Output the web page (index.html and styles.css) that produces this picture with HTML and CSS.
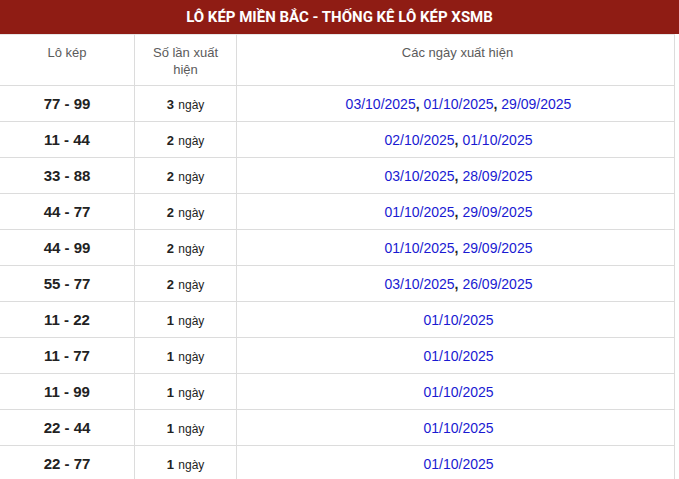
FILE: index.html
```html
<!DOCTYPE html>
<html lang="vi">
<head>
<meta charset="utf-8">
<title>Lô kép miền Bắc</title>
<link rel="stylesheet" href="styles.css">
</head>
<body>
<div class="title">LÔ KÉP MIỀN BẮC - THỐNG KÊ LÔ KÉP XSMB</div>
<table class="stats">
  <colgroup><col class="c1"><col class="c2"><col class="c3"></colgroup>
  <thead>
    <tr><th>Lô kép</th><th>Số lần xuất hiện</th><th>Các ngày xuất hiện</th></tr>
  </thead>
  <tbody>
    <tr><td class="pair">77 - 99</td><td class="cnt"><b>3</b> <span>ngày</span></td><td class="dates"><a>03/10/2025</a><b>,</b> <a>01/10/2025</a><b>,</b> <a>29/09/2025</a></td></tr>
    <tr><td class="pair">11 - 44</td><td class="cnt"><b>2</b> <span>ngày</span></td><td class="dates"><a>02/10/2025</a><b>,</b> <a>01/10/2025</a></td></tr>
    <tr><td class="pair">33 - 88</td><td class="cnt"><b>2</b> <span>ngày</span></td><td class="dates"><a>03/10/2025</a><b>,</b> <a>28/09/2025</a></td></tr>
    <tr><td class="pair">44 - 77</td><td class="cnt"><b>2</b> <span>ngày</span></td><td class="dates"><a>01/10/2025</a><b>,</b> <a>29/09/2025</a></td></tr>
    <tr><td class="pair">44 - 99</td><td class="cnt"><b>2</b> <span>ngày</span></td><td class="dates"><a>01/10/2025</a><b>,</b> <a>29/09/2025</a></td></tr>
    <tr><td class="pair">55 - 77</td><td class="cnt"><b>2</b> <span>ngày</span></td><td class="dates"><a>03/10/2025</a><b>,</b> <a>26/09/2025</a></td></tr>
    <tr><td class="pair">11 - 22</td><td class="cnt"><b>1</b> <span>ngày</span></td><td class="dates"><a>01/10/2025</a></td></tr>
    <tr><td class="pair">11 - 77</td><td class="cnt"><b>1</b> <span>ngày</span></td><td class="dates"><a>01/10/2025</a></td></tr>
    <tr><td class="pair">11 - 99</td><td class="cnt"><b>1</b> <span>ngày</span></td><td class="dates"><a>01/10/2025</a></td></tr>
    <tr><td class="pair">22 - 44</td><td class="cnt"><b>1</b> <span>ngày</span></td><td class="dates"><a>01/10/2025</a></td></tr>
    <tr><td class="pair">22 - 77</td><td class="cnt"><b>1</b> <span>ngày</span></td><td class="dates"><a>01/10/2025</a></td></tr>
  </tbody>
</table>
</body>
</html>
```

FILE: styles.css
```css
html, body {
  margin: 0;
  padding: 0;
  background: #fff;
}
body {
  font-family: "Liberation Sans", Arial, sans-serif;
  color: #222;
}
.title {
  height: 34px;
  background: #8f1c14;
  color: #fff;
  font-family: Roboto, "Liberation Sans", sans-serif;
  font-weight: 700;
  font-size: 15px;
  line-height: 34px;
  text-align: center;
}
.stats {
  width: 675px;
  border-collapse: separate;
  border-spacing: 0;
  table-layout: fixed;
}
.c1 { width: 135px; }
.c2 { width: 102px; }
.c3 { width: 438px; }
.stats th,
.stats td {
  box-sizing: border-box;
  border-right: 1px solid #dcdcdc;
  border-bottom: 1px solid #dcdcdc;
  text-align: center;
  padding: 0 4px;
}
.stats th {
  height: 52px;
  vertical-align: top;
  font-weight: 400;
  font-size: 13px;
  line-height: 17px;
  color: #5b5b5b;
  padding-top: 9px;
  border-top: 1px solid #e6e6e6;
}
.stats thead th:nth-child(2) {
  padding-left: 14px;
  padding-right: 14px;
}
.stats thead th:nth-child(3) {
  padding-left: 6px;
  padding-right: 2px;
}
.stats td {
  height: 36px;
  vertical-align: middle;
}
.pair {
  font-weight: 700;
  font-size: 15px;
}
.cnt b {
  font-size: 13px;
  font-weight: 700;
}
.cnt span {
  font-size: 12px;
}
.stats td.dates {
  font-size: 14px;
  padding-left: 7px;
  padding-right: 1px;
}
.dates a {
  color: #1a1ad2;
}
.dates b {
  color: #222;
}
```
